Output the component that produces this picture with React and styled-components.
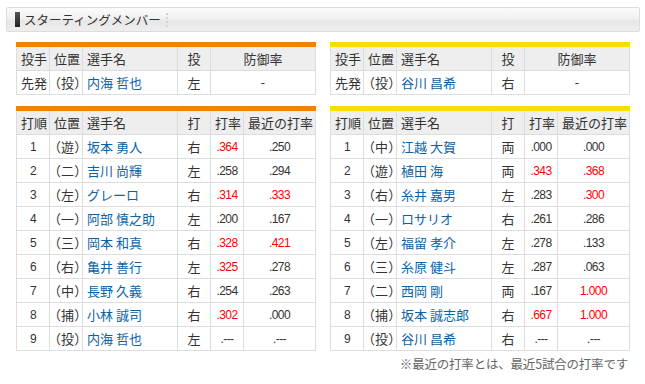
import React from "react";
import styled, { createGlobalStyle } from "styled-components";

const GlobalStyle = createGlobalStyle`
  body {
    margin: 0;
    background: #ffffff;
    font-family: "Liberation Sans", "Noto Sans CJK JP", sans-serif;
    color: #333333;
  }
`;

const Page = styled.div`
  width: 645px;
  box-sizing: border-box;
  padding: 7px 5px 0 6px;
`;

const TitleBar = styled.div`
  height: 25px;
  box-sizing: border-box;
  border: 1px solid #dcdcdc;
  border-radius: 2px;
  background: linear-gradient(#fbfbfb 0%, #f1f1f1 45%, #e7e7e7 55%, #eeeeee 100%);
  display: flex;
  align-items: center;
  padding-left: 8px;
`;

const TitleMark = styled.span`
  width: 5px;
  height: 15px;
  background: linear-gradient(#555555, #222222);
  margin-right: 4px;
`;

const TitleText = styled.h2`
  margin: 0;
  font-family: "Noto Sans CJK JP", sans-serif;
  font-size: 12.5px;
  font-weight: normal;
  color: #333333;
  line-height: 16px;
  letter-spacing: 0;
`;

const TitleSep = styled.span`
  height: 14px;
  margin-left: 5px;
  border-left: 2px dotted #d4d4d4;
`;

const Columns = styled.div`
  display: flex;
  gap: 14px;
  padding: 0 10px;
  margin-top: 10px;
`;

const Column = styled.div`
  width: 300px;
  display: flex;
  flex-direction: column;
  gap: 11px;
`;

const Block = styled.div`
  border-top: 5px solid ${(p) => p.$accent};
`;

const Table = styled.table`
  width: 300px;
  border-collapse: collapse;
  table-layout: fixed;
  font-size: 13px;
  line-height: 16px;
`;

const Th = styled.th`
  height: 23px;
  padding: 0 0 0 ${(p) => (p.$center ? 0 : 4)}px;
  background: #eeeeee;
  border: 1px solid #dddddd;
  border-top: none;
  font-family: "Noto Sans CJK JP", sans-serif;
  font-weight: normal;
  color: #333333;
  text-align: ${(p) => (p.$center ? "center" : "left")};
  white-space: nowrap;
`;

const Td = styled.td`
  height: 23px;
  padding: 0 0 0 ${(p) => (p.$center ? 0 : 4)}px;
  border: 1px solid #dddddd;
  background: #ffffff;
  font-family: "Noto Sans CJK JP", sans-serif;
  color: #333333;
  text-align: ${(p) => (p.$center ? "center" : "left")};
  white-space: nowrap;
  overflow: hidden;
`;

const Pos = styled.span`
  font-feature-settings: "palt";
  letter-spacing: 0.6px;
`;

const Name = styled.a`
  color: #0a63a8;
  text-decoration: none;
`;

const Num = styled.span`
  font-family: "Liberation Sans", sans-serif;
  font-size: 12px;
  letter-spacing: -0.6px;
  color: ${(p) => (p.$hot ? "#ff0000" : "#333333")};
`;

const Dash = styled.span`
  font-family: "Liberation Sans", sans-serif;
  font-size: 13px;
`;

const Note = styled.p`
  margin: 5px 2px 0 0;
  text-align: right;
  font-family: "Noto Sans CJK JP", sans-serif;
  font-size: 12.5px;
  line-height: 16px;
  color: #666666;
  letter-spacing: -0.2px;
`;

const hot = (v) => v !== ".---" && parseFloat(v) >= 0.3;

const pitchers = {
  home: { name: "内海 哲也", hand: "左" },
  away: { name: "谷川 昌希", hand: "右" },
};

const lineups = {
  home: [
    ["1", "（遊）", "坂本 勇人", "右", ".364", ".250"],
    ["2", "（二）", "吉川 尚輝", "左", ".258", ".294"],
    ["3", "（左）", "グレーロ", "右", ".314", ".333"],
    ["4", "（一）", "阿部 慎之助", "左", ".200", ".167"],
    ["5", "（三）", "岡本 和真", "右", ".328", ".421"],
    ["6", "（右）", "亀井 善行", "左", ".325", ".278"],
    ["7", "（中）", "長野 久義", "右", ".254", ".263"],
    ["8", "（捕）", "小林 誠司", "右", ".302", ".000"],
    ["9", "（投）", "内海 哲也", "左", ".---", ".---"],
  ],
  away: [
    ["1", "（中）", "江越 大賀", "両", ".000", ".000"],
    ["2", "（遊）", "植田 海", "両", ".343", ".368"],
    ["3", "（右）", "糸井 嘉男", "左", ".283", ".300"],
    ["4", "（一）", "ロサリオ", "右", ".261", ".286"],
    ["5", "（左）", "福留 孝介", "左", ".278", ".133"],
    ["6", "（三）", "糸原 健斗", "左", ".287", ".063"],
    ["7", "（二）", "西岡 剛", "両", ".167", "1.000"],
    ["8", "（捕）", "坂本 誠志郎", "右", ".667", "1.000"],
    ["9", "（投）", "谷川 昌希", "右", ".---", ".---"],
  ],
};

const PitcherTable = ({ accent, pitcher }) => (
  <Block $accent={accent}>
    <Table>
      <colgroup>
        <col style={{ width: 33 }} />
        <col style={{ width: 33 }} />
        <col style={{ width: 95 }} />
        <col style={{ width: 33 }} />
        <col />
      </colgroup>
      <thead>
        <tr>
          <Th>投手</Th>
          <Th>位置</Th>
          <Th>選手名</Th>
          <Th $center>投</Th>
          <Th $center>防御率</Th>
        </tr>
      </thead>
      <tbody>
        <tr>
          <Td>先発</Td>
          <Td>
            <Pos>（投）</Pos>
          </Td>
          <Td>
            <Name href="#">{pitcher.name}</Name>
          </Td>
          <Td $center>{pitcher.hand}</Td>
          <Td $center>
            <Dash>-</Dash>
          </Td>
        </tr>
      </tbody>
    </Table>
  </Block>
);

const BatterTable = ({ accent, rows }) => (
  <Block $accent={accent}>
    <Table>
      <colgroup>
        <col style={{ width: 33 }} />
        <col style={{ width: 33 }} />
        <col style={{ width: 95 }} />
        <col style={{ width: 33 }} />
        <col style={{ width: 33 }} />
        <col />
      </colgroup>
      <thead>
        <tr>
          <Th>打順</Th>
          <Th>位置</Th>
          <Th>選手名</Th>
          <Th $center>打</Th>
          <Th>打率</Th>
          <Th>最近の打率</Th>
        </tr>
      </thead>
      <tbody>
        {rows.map(([order, pos, name, hand, avg, recent]) => (
          <tr key={order}>
            <Td $center>
              <Num>{order}</Num>
            </Td>
            <Td>
              <Pos>{pos}</Pos>
            </Td>
            <Td>
              <Name href="#">{name}</Name>
            </Td>
            <Td $center>{hand}</Td>
            <Td $center>
              <Num $hot={hot(avg)}>{avg}</Num>
            </Td>
            <Td $center>
              <Num $hot={hot(recent)}>{recent}</Num>
            </Td>
          </tr>
        ))}
      </tbody>
    </Table>
  </Block>
);

export default function App() {
  return (
    <Page>
      <GlobalStyle />
      <TitleBar>
        <TitleMark />
        <TitleText>スターティングメンバー</TitleText>
        <TitleSep />
      </TitleBar>
      <Columns>
        <Column>
          <PitcherTable accent="#ee8400" pitcher={pitchers.home} />
          <BatterTable accent="#ee8400" rows={lineups.home} />
        </Column>
        <Column>
          <PitcherTable accent="#ffdd00" pitcher={pitchers.away} />
          <div>
            <BatterTable accent="#ffdd00" rows={lineups.away} />
            <Note>※最近の打率とは、最近5試合の打率です</Note>
          </div>
        </Column>
      </Columns>
    </Page>
  );
}
